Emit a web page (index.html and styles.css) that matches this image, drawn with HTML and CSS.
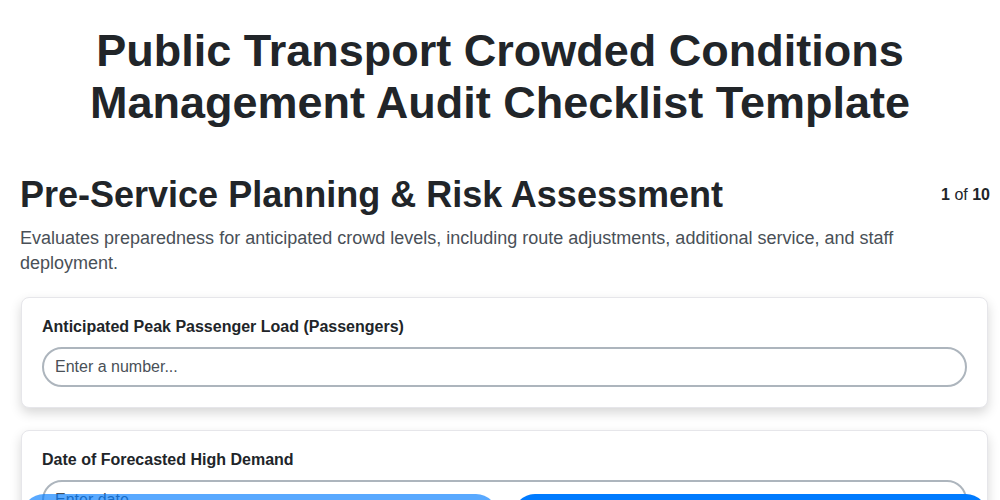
FILE: index.html
```html
<!DOCTYPE html>
<html lang="en">
<head>
  <meta charset="UTF-8" />
  <meta name="viewport" content="width=device-width, initial-scale=1.0"/>
  <title>Audit Checklist</title>
  <link rel="stylesheet" href="styles.css">
</head>
<body>

  <div class="page">
    <h1>Public Transport Crowded Conditions Management Audit Checklist Template</h1>

    <div class="section-head">
      <h2>Pre-Service Planning &amp; Risk Assessment</h2>
      <span class="step"><b>1</b> of <b>10</b></span>
    </div>
    <p class="section-desc">Evaluates preparedness for anticipated crowd levels, including route adjustments, additional service, and staff deployment.</p>

    <div class="card">
      <label for="peakLoad">Anticipated Peak Passenger Load (Passengers)</label>
      <input type="text" id="peakLoad" placeholder="Enter a number...">
    </div>

    <div class="card">
      <label for="demandDate">Date of Forecasted High Demand</label>
      <input type="text" id="demandDate" placeholder="Enter date...">
    </div>
  </div>

  <div class="footer">
    <button class="btn btn-prev" disabled>Previous</button>
    <button class="btn btn-next">Next</button>
  </div>
</body>
</html>
```

FILE: styles.css
```css
:root {
  --text: #212529;
  --muted: #495057;
  --border: #adb5bd;
  --accent: #007bff;
}

body {
  font-family: "Liberation Sans", Arial, sans-serif;
  color: var(--text);
  background: #fff;
  margin: 0;
}

.page {
  padding: 0 10px 80px 20px;
}

h1 {
  font-size: 45px;
  line-height: 52px;
  text-align: center;
  margin: 25px 45px 44px 35px;
}

.section-head {
  display: flex;
  justify-content: space-between;
  align-items: flex-start;
}

h2 {
  font-size: 36px;
  line-height: 43px;
  margin: 0;
}

.step {
  font-size: 16px;
  margin-top: 13px;
}

.section-desc {
  font-size: 18px;
  line-height: 25px;
  color: var(--muted);
  margin: 10px 0 21px;
}

.card {
  display: flex;
  flex-direction: column;
  background: #fff;
  border: 1px solid #e6e6ea;
  border-radius: 8px;
  padding: 20px;
  margin: 0 2px 22px 1px;
  box-shadow: 0 5px 12px rgba(0, 0, 0, 0.16);
}

label {
  font-size: 16px;
  font-weight: bold;
  line-height: 19px;
  margin-top: -1px;
  margin-bottom: 11px;
}

input[type="text"] {
  height: 40px;
  padding: 0 11px;
  font-family: inherit;
  font-size: 16px;
  border: 2px solid var(--border);
  border-radius: 20px;
  box-sizing: border-box;
  outline: none;
}

input::placeholder {
  color: var(--muted);
}

.footer {
  position: fixed;
  left: 22px;
  right: 12px;
  bottom: -40px;
  display: flex;
  gap: 15px;
}

.btn {
  flex: 1;
  height: 46px;
  border: none;
  border-radius: 22px;
  color: #fff;
  font-size: 16px;
  font-family: inherit;
  background-color: var(--accent);
}

.btn-prev {
  opacity: 0.65;
}
```
